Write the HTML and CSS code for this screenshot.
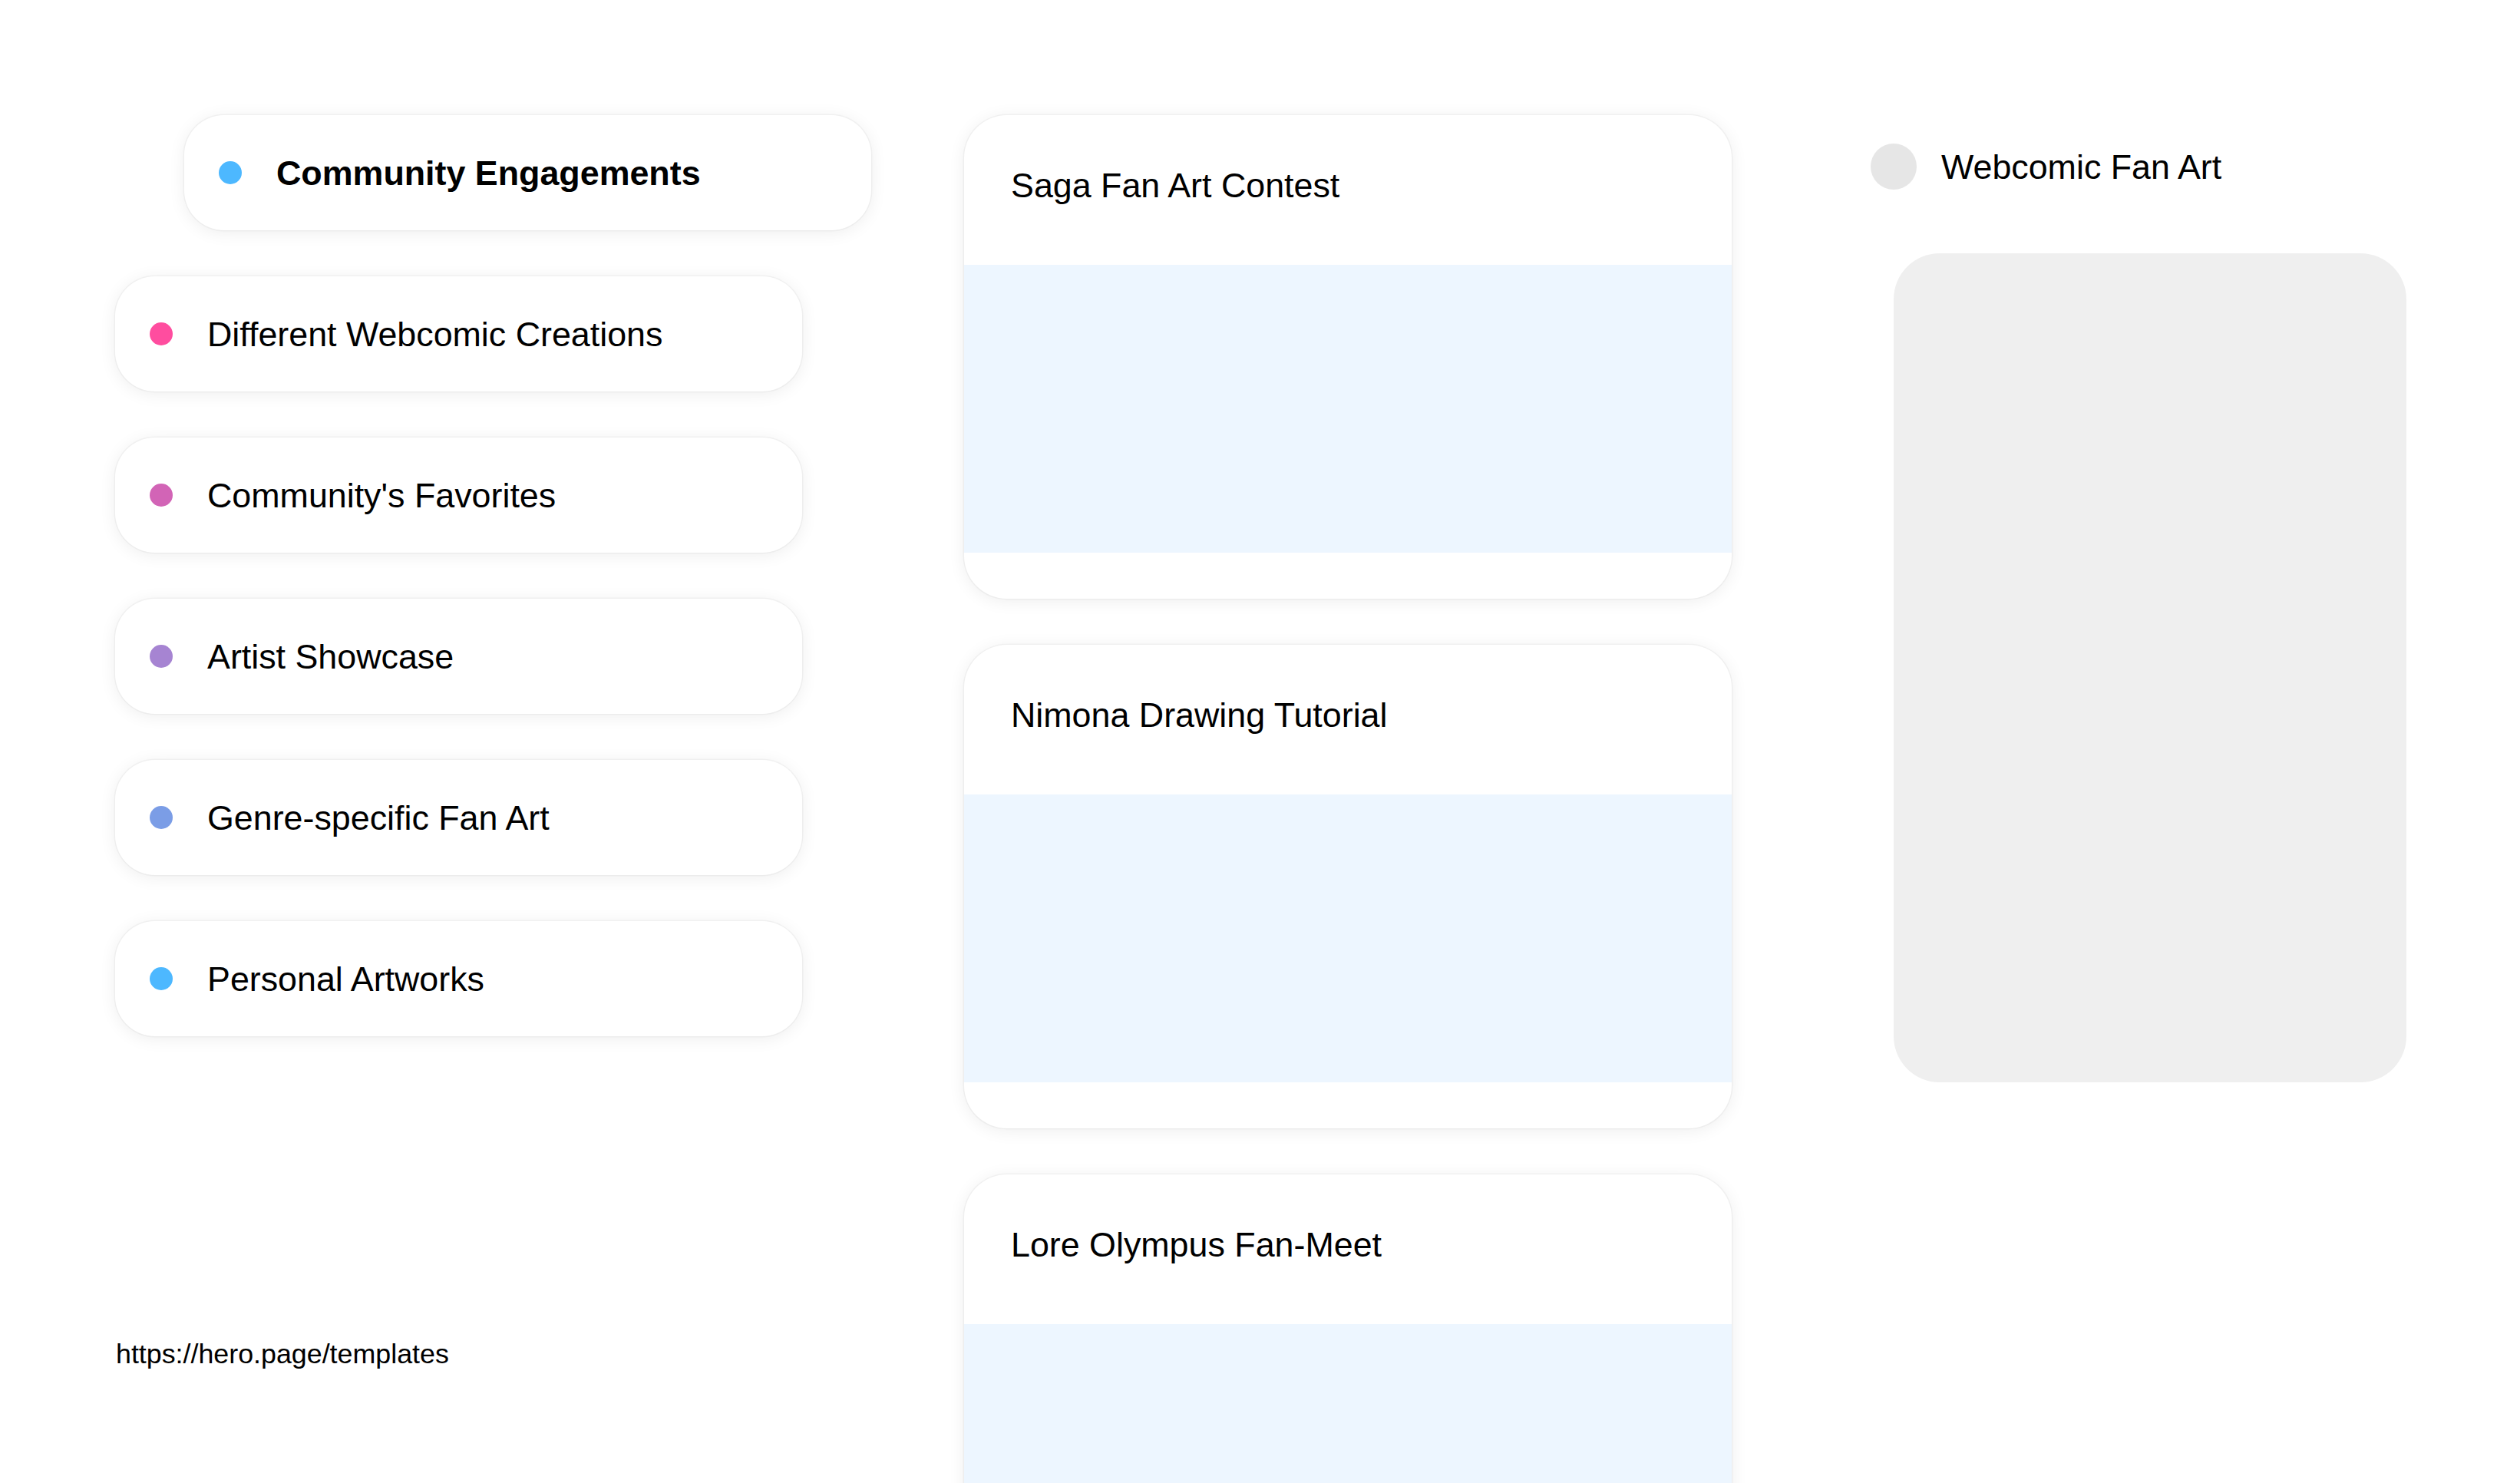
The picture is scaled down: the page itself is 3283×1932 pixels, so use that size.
FILE: index.html
```html
<!DOCTYPE html>
<html lang="en">
<head>
<meta charset="utf-8">
<title>Webcomic Fan Art</title>
<link rel="stylesheet" href="styles.css">
</head>
<body>
<div class="page">
  <div class="col-left">
    <ul class="pill-list">
      <li class="pill pill-active"><span class="dot dot-blue"></span><span class="pill-label">Community Engagements</span></li>
      <li class="pill"><span class="dot dot-pink"></span><span class="pill-label">Different Webcomic Creations</span></li>
      <li class="pill"><span class="dot dot-magenta"></span><span class="pill-label">Community's Favorites</span></li>
      <li class="pill"><span class="dot dot-violet"></span><span class="pill-label">Artist Showcase</span></li>
      <li class="pill"><span class="dot dot-periwinkle"></span><span class="pill-label">Genre-specific Fan Art</span></li>
      <li class="pill"><span class="dot dot-blue"></span><span class="pill-label">Personal Artworks</span></li>
    </ul>
    <div class="footer-link">https://hero.page/templates</div>
  </div>

  <div class="col-middle">
    <div class="card">
      <div class="card-head"><h2 class="card-title">Saga Fan Art Contest</h2></div>
      <div class="card-media"></div>
      <div class="card-foot"></div>
    </div>
    <div class="card">
      <div class="card-head"><h2 class="card-title">Nimona Drawing Tutorial</h2></div>
      <div class="card-media"></div>
      <div class="card-foot"></div>
    </div>
    <div class="card">
      <div class="card-head"><h2 class="card-title">Lore Olympus Fan-Meet</h2></div>
      <div class="card-media"></div>
      <div class="card-foot"></div>
    </div>
  </div>

  <div class="col-right">
    <div class="side-head">
      <span class="avatar"></span>
      <span class="side-title">Webcomic Fan Art</span>
    </div>
    <div class="side-panel"></div>
  </div>
</div>
</body>
</html>
```

FILE: styles.css
```css
html, body {
  margin: 0;
  padding: 0;
  background: #ffffff;
}

body {
  font-family: "Liberation Sans", Arial, sans-serif;
  color: #000000;
}

.page {
  display: flex;
  align-items: flex-start;
  padding: 150px 0 0 150px;
  gap: 116px;
}

/* Left column */
.col-left {
  width: 990px;
  flex: none;
  display: flex;
  flex-direction: column;
}

.pill-list {
  list-style: none;
  margin: 0;
  padding: 0;
  display: flex;
  flex-direction: column;
  gap: 60px;
}

.pill {
  box-sizing: border-box;
  width: 895px;
  height: 150px;
  display: flex;
  align-items: center;
  padding-left: 45px;
  background: #ffffff;
  border-radius: 52px;
  box-shadow: 0 0 0 1.5px rgba(0, 0, 0, 0.035), 0 3px 22px rgba(0, 0, 0, 0.07);
}

.pill-active {
  margin-left: 90px;
}

.dot {
  width: 30px;
  height: 30px;
  border-radius: 50%;
  flex: none;
  margin-right: 45px;
}

.dot-blue { background: #4db8ff; }
.dot-pink { background: #ff4d9f; }
.dot-magenta { background: #d264b6; }
.dot-violet { background: #a684d2; }
.dot-periwinkle { background: #7b9de6; }

.pill-label {
  font-size: 44.8px;
  line-height: normal;
  white-space: nowrap;
}

.pill-active .pill-label {
  font-weight: 700;
}

.footer-link {
  margin-top: 394px;
  font-size: 35.8px;
  line-height: normal;
  margin-left: 1px;
}

/* Middle column */
.col-middle {
  width: 1000px;
  flex: none;
  display: flex;
  flex-direction: column;
  gap: 60px;
}

.card {
  height: 630px;
  display: flex;
  flex-direction: column;
  background: #ffffff;
  border-radius: 56px;
  overflow: hidden;
  box-shadow: 0 0 0 1.5px rgba(0, 0, 0, 0.035), 0 3px 22px rgba(0, 0, 0, 0.07);
}

.card-head {
  box-sizing: border-box;
  height: 195px;
  flex: none;
  padding: 66px 61px 0 61px;
}

.card-title {
  margin: 0;
  font-size: 44.8px;
  font-weight: 400;
  line-height: normal;
}

.card-media {
  height: 375px;
  flex: none;
  background: #edf6ff;
}

.card-foot {
  flex: 1;
}

/* Right column */
.col-right {
  margin-left: 65px;
  width: 720px;
  flex: none;
  padding-top: 37px;
}

.side-head {
  display: flex;
  align-items: center;
  height: 60px;
}

.avatar {
  width: 60px;
  height: 60px;
  border-radius: 50%;
  background: #e6e6e6;
  flex: none;
  margin-right: 32px;
}

.side-title {
  font-size: 44.8px;
  line-height: normal;
  white-space: nowrap;
}

.side-panel {
  margin: 83px 0 0 30px;
  width: 668px;
  height: 1080px;
  border-radius: 60px;
  background: #efefef;
}
```
